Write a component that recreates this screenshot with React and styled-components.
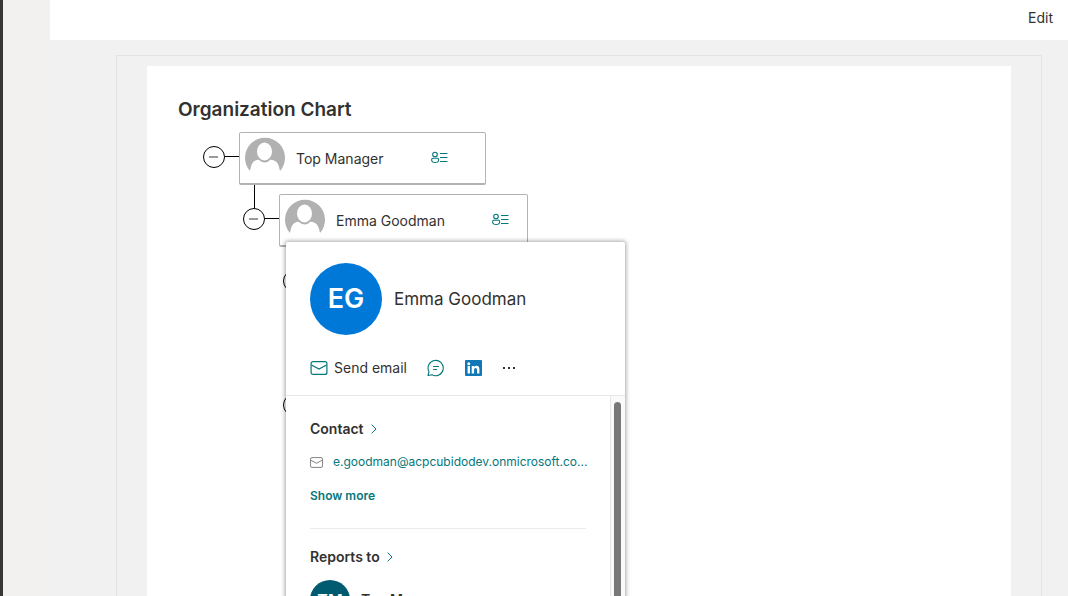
import React from "react";
import styled, { createGlobalStyle } from "styled-components";

const teal = "#03787c";

const GlobalStyle = createGlobalStyle`
  * { box-sizing: border-box; }
  body { margin: 0; background: #f1f1f1; color: #323130; font: 14px/20px Inter, "Liberation Sans", sans-serif; }
  h1, h2, h3, p, ul { margin: 0; padding: 0; }
  ul { list-style: none; }
  button { border: 0; padding: 0; background: none; font: inherit; color: inherit; cursor: pointer; }
  a { color: inherit; text-decoration: none; }
  svg { display: block; flex: none; }
`;

const Shell = styled.div`
  display: flex;
  height: 100vh;
  overflow: hidden;
  border-left: 3px solid #383636;
`;
const Rail = styled.aside`
  flex: none;
  width: 47px;
  background: #f3f1ef;
`;
const Main = styled.div`
  flex: 1;
  min-width: 0;
  display: flex;
  flex-direction: column;
`;
const CommandBar = styled.header`
  flex: none;
  display: flex;
  align-items: center;
  justify-content: flex-end;
  height: 40px;
  padding: 0 15px 4px;
  background: #fff;
`;
const Canvas = styled.main`
  flex: 1;
  display: flex;
  padding: 15px 26px 0 66px;
`;
const WebPart = styled.section`
  flex: 1;
  display: flex;
  padding: 10px 30px 0;
  border: 1px solid #e3e3e3;
  border-bottom: 0;
`;
const Sheet = styled.div`
  flex: 1;
  padding: 30px 31px;
  background: #fff;
`;
const Title = styled.h1`
  font-size: 19px;
  line-height: 28px;
  font-weight: 600;
`;
const Tree = styled.ul`
  padding: 8px 0 0 25px !important;
`;
const Branch = styled.ul`
  padding-left: 40px !important;
`;
const Node = styled.li`
  position: relative;
`;
const NodeRow = styled.div`
  display: flex;
  align-items: flex-start;
  height: 62px;
`;
const Toggle = styled.button`
  display: grid;
  place-items: center;
  width: 22px;
  height: 22px;
  margin-top: 14px;
  border: 1px solid #000 !important;
  border-radius: 50%;
  background: #fff;
`;
const Link = styled.span`
  width: 14px;
  height: 1px;
  margin-top: 24px;
  background: #000;
`;
const Stem = styled.span`
  position: absolute;
  left: 51px;
  top: 53px;
  width: 1px;
  height: 23px;
  background: #000;
`;
const NodeCard = styled.article`
  display: flex;
  align-items: center;
  min-width: 247px;
  height: 53px;
  padding: 0 18px 2px 5px;
  border: 1px solid #b3b3b3;
  border-bottom: 2px solid #b3b3b3;
  border-radius: 2px;
  background: #fff;
`;
const NodeName = styled.span`
  margin: 4px 47px 0 11px;
`;
const Callout = styled.section`
  position: absolute;
  z-index: 2;
  top: 48px;
  left: 43px;
  width: 339px;
  border-radius: 2px;
  background: #fff;
  box-shadow: 0 0 4px 1px rgba(0, 0, 0, 0.35);
`;
const CalloutHeader = styled.header`
  padding: 21px 24px 15px;
  border-bottom: 1px solid #e6e6e6;
`;
const Persona = styled.div`
  display: flex;
  align-items: center;
  gap: 12px;
`;
const Coin = styled.span`
  display: grid;
  place-items: center;
  flex: none;
  width: ${(p) => p.$size}px;
  height: ${(p) => p.$size}px;
  border-radius: 50%;
  background: ${(p) => p.$color};
  color: #fff;
  font-size: ${(p) => (p.$size > 40 ? 27 : 16)}px;
  font-weight: 600;
`;
const PersonaName = styled.h2`
  font-size: 17px;
  line-height: 24px;
  font-weight: 400;
`;
const Actions = styled.div`
  display: flex;
  align-items: center;
  gap: 20px;
  height: 24px;
  margin-top: 21px;
`;
const Action = styled.button`
  display: flex;
  align-items: center;
  gap: 6px;
`;
const CalloutBody = styled.div`
  display: flex;
  height: 480px;
  overflow: hidden;
`;
const Details = styled.div`
  flex: 1;
  min-width: 0;
  padding: 23px 24px 0;
`;
const ScrollTrack = styled.div`
  flex: none;
  width: 15px;
  padding: 6px 4px 6px 3px;
  border-left: 1px solid #e6e6e6;
  background: #fafafa;
`;
const ScrollThumb = styled.div`
  width: 7px;
  height: 360px;
  border-radius: 4px;
  background: #797979;
`;
const SectionTitle = styled.h3`
  display: flex;
  align-items: center;
  gap: 7px;
  font-size: 14px;
  line-height: 20px;
  font-weight: 600;
`;
const EmailRow = styled.div`
  display: flex;
  align-items: center;
  gap: 10px;
  margin-top: 15px;
`;
const EmailLink = styled.a`
  min-width: 0;
  font-size: 12px;
  line-height: 16px;
  white-space: nowrap;
  color: ${teal};
`;
const ShowMore = styled.button`
  display: block;
  margin: 17px 0 23px;
  color: ${teal};
  font-size: 12px !important;
  line-height: 18px !important;
  font-weight: 600 !important;
`;
const Divider = styled.hr`
  height: 1px;
  margin: 0 0 18px;
  border: 0;
  background: #edebe9;
`;
const Manager = styled(Persona)`
  margin-top: 13px;
  gap: 11px;
  font-weight: 600;
`;

const PersonIcon = () => (
  <svg width="40" height="40" viewBox="0 0 40 40">
    <path fill="#b1b1b1" d="M5 34A20 20 0 1 1 35 34C34 29 33 25 29 23.5Q26.500 22.500 25 23Q20 28 14 23Q12 22.500 10 23.800C7 25 6 29 5 34Z" />
    <ellipse cx="19.500" cy="14.500" rx="7.500" ry="9" fill="#fff" />
  </svg>
);
const ContactCardIcon = () => (
  <svg width="17" height="13" viewBox="0 0 17 13" fill="none" stroke={teal} strokeWidth="1.100">
    <circle cx="4" cy="3.500" r="2.300" />
    <path d="M2 7.200H6.500Q7.700 7.200 7.700 8.700Q7.500 11.500 4.200 11.500Q.700 11.500 .600 8.700Q.600 7.200 2 7.200ZM9 2.500H16.500M9 6.500H16.500M9 10.500H16.500" />
  </svg>
);
const MailIcon = ({ width, height, color }) => (
  <svg width={width} height={height} viewBox="0 0 17 14" fill="none" stroke={color} strokeWidth="1.200">
    <rect x=".600" y=".600" width="15.800" height="12.800" rx="2" />
    <path d="M1 4L8.500 8L16 4" />
  </svg>
);
const ChatIcon = () => (
  <svg width="18" height="18" viewBox="0 0 18 18" fill="none" stroke={teal} strokeWidth="1.100" strokeLinecap="round" strokeLinejoin="round">
    <path d="M1 16.500L2 12.700A7.600 7.600 0 1 1 5 15.700ZM6.500 7.500H11.500M6.500 10.500H9.500" />
  </svg>
);
const LinkedInIcon = () => (
  <svg width="17" height="16" viewBox="0 0 17 16">
    <rect width="17" height="16" rx="1" fill="#1178b5" />
    <circle cx="3.800" cy="3.700" r="1.500" fill="#fff" />
    <path fill="#fff" d="M2.600 6H5V13.500H2.600ZM6.700 6H9V7.100Q9.800 5.800 11.300 5.800Q14.400 5.800 14.400 9.200V13.500H12V9.700Q12 7.900 10.700 7.900Q9.100 7.900 9.100 9.900V13.500H6.700Z" />
  </svg>
);
const MoreIcon = () => (
  <svg width="14" height="4" viewBox="0 0 14 4" fill="#323130">
    <path d="M1 1H3V3H1ZM6 1H8V3H6ZM11 1H13V3H11Z" />
  </svg>
);
const Chevron = () => (
  <svg width="6" height="10" viewBox="0 0 6 10" fill="none" stroke={teal}>
    <path d="M.700 .700L5 5L.700 9.300" />
  </svg>
);

const ToggleButton = () => (
  <Toggle aria-label="Collapse">
    <svg width="10" height="2" viewBox="0 0 10 2"><path d="M0 1H9" stroke="#9a9a9a" strokeWidth="2" /></svg>
  </Toggle>
);
const Person = ({ name }) => (
  <NodeRow>
    <ToggleButton />
    <Link />
    <NodeCard>
      <PersonIcon />
      <NodeName>{name}</NodeName>
      <button aria-label="Contact card"><ContactCardIcon /></button>
    </NodeCard>
  </NodeRow>
);

const ContactCallout = () => (
  <Callout>
    <CalloutHeader>
      <Persona>
        <Coin $size={72} $color="#0078d7">EG</Coin>
        <PersonaName>Emma Goodman</PersonaName>
      </Persona>
      <Actions>
        <Action><MailIcon width={18} height={14} color={teal} />Send email</Action>
        <Action aria-label="Chat"><ChatIcon /></Action>
        <Action aria-label="LinkedIn"><LinkedInIcon /></Action>
        <Action aria-label="More"><MoreIcon /></Action>
      </Actions>
    </CalloutHeader>
    <CalloutBody>
      <Details>
        <SectionTitle>Contact <Chevron /></SectionTitle>
        <EmailRow>
          <MailIcon width={13} height={11} color="#797775" />
          <EmailLink href="#email">e.goodman@acpcubidodev.onmicrosoft.co...</EmailLink>
        </EmailRow>
        <ShowMore>Show more</ShowMore>
        <Divider />
        <SectionTitle>Reports to <Chevron /></SectionTitle>
        <Manager>
          <Coin $size={40} $color="#005b70">TM</Coin>
          <span>Top Manager</span>
        </Manager>
      </Details>
      <ScrollTrack><ScrollThumb /></ScrollTrack>
    </CalloutBody>
  </Callout>
);

export default function App() {
  return (
    <>
      <GlobalStyle />
      <Shell>
        <Rail />
        <Main>
          <CommandBar><button>Edit</button></CommandBar>
          <Canvas>
            <WebPart>
              <Sheet>
                <Title>Organization Chart</Title>
                <Tree>
                  <Node>
                    <Person name="Top Manager" />
                    <Stem />
                    <Branch>
                      <Node>
                        <Person name="Emma Goodman" />
                        <Branch>
                          <Node><NodeRow><ToggleButton /></NodeRow></Node>
                          <Node><NodeRow /></Node>
                          <Node><NodeRow><ToggleButton /></NodeRow></Node>
                        </Branch>
                        <ContactCallout />
                      </Node>
                    </Branch>
                  </Node>
                </Tree>
              </Sheet>
            </WebPart>
          </Canvas>
        </Main>
      </Shell>
    </>
  );
}
